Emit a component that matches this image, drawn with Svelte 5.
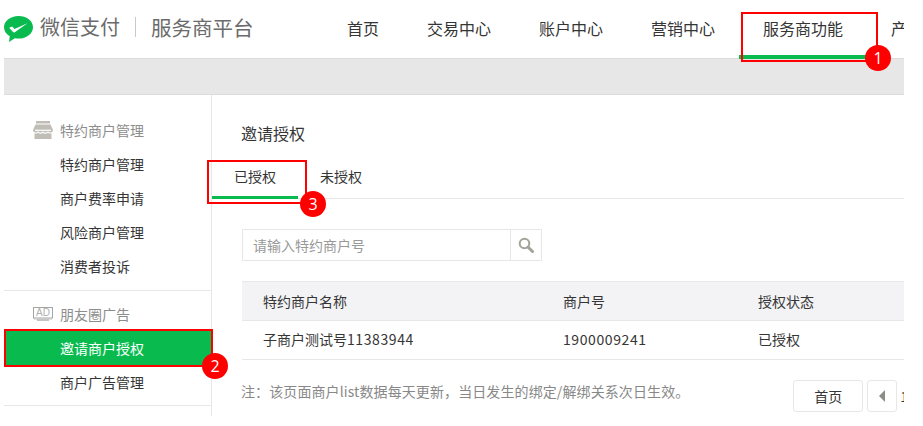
<script>
  const navs = ['首页', '交易中心', '账户中心', '营销中心', '服务商功能', '产品中心']
  const specials = ['特约商户管理', '商户费率申请', '风险商户管理', '消费者投诉']
</script>

<div class="page">
  <header>
    <div class="brand">
      <svg class="logo" width="29" height="26" viewBox="0 0 29 26">
        <path d="M14.500 0C6.500 0 0 5 0 11.200c0 3.800 2.300 7 5.800 9L5 26l5.800-3.700c1.200.2 2.400.3 3.700.3 8 0 14.500-5 14.500-11.400S22.500 0 14.500 0z" fill="#09bb4f" />
        <path d="M5.200 11.800l3-1.300 2.300 2.600L23.500 7.200 10.800 16.300c-.6.400-1.300.3-1.800-.2z" fill="#fff" />
      </svg>
      <span class="pay">微信支付</span>
      <span class="divider"></span>
      <span class="pay wide">服务商平台</span>
    </div>
    <nav>
      {#each navs as item, i}
        <a class:active={i === 4}>{item}</a>
      {/each}
    </nav>
  </header>
  <div class="band"></div>

  <div class="body">
    <aside>
      <section>
        <h4>
          <svg width="20" height="18" viewBox="0 0 20 18">
            <path d="M3 0h14v2.500H3zM2.500 3.500h15L20 9H0z" fill="#bfbdb6" />
            <path d="M0 9h20c0 1.500-1 2.500-2.500 2.500-1 0-2-.5-2.500-1.300-.5.800-1.500 1.300-2.500 1.300s-2-.5-2.500-1.300c-.5.800-1.500 1.300-2.500 1.300S5.500 11 5 10.200C4.500 11 3.500 11.500 2.500 11.500 1 11.500 0 10.500 0 9z" fill="#bfbdb6" />
            <path d="M1.500 12.500c1.300.2 2.600 0 3.500-.8.800.7 1.600 1 2.500 1s1.900-.3 2.500-1c.6.700 1.600 1 2.500 1s1.700-.3 2.500-1c.9.800 2.200 1 3.500.8V18h-17z" fill="#bfbdb6" />
            <path d="M2 8.700h16v1.200H2z" fill="#fff" />
          </svg>
          特约商户管理
        </h4>
        {#each specials as s}
          <a>{s}</a>
        {/each}
      </section>
      <section>
        <h4>
          <svg width="20" height="14" viewBox="0 0 20 14">
            <rect x="0.500" y="0.500" width="19" height="10.500" fill="none" stroke="#a5a5a5" />
            <path d="M1 11.500h18v1H1zM4 12.500h12V14H4z" fill="#c4c4c4" />
            <text x="10" y="9" text-anchor="middle" font-size="10" fill="#b0b0b0" font-family="Liberation Sans, sans-serif">AD</text>
          </svg>
          朋友圈广告
        </h4>
        <a class="current">邀请商户授权</a>
        <a class="after">商户广告管理</a>
      </section>
    </aside>

    <main>
      <h2>邀请授权</h2>
      <div class="tabs">
        <a class="tab on">已授权</a>
        <a class="tab">未授权</a>
      </div>
      <div class="search">
        <span class="field">请输入特约商户号</span>
        <span class="go">
          <svg width="16" height="16" viewBox="0 0 16 16">
            <circle cx="6.500" cy="6.500" r="4.800" fill="none" stroke="#a3a39b" stroke-width="2" />
            <path d="M10 10l4.500 4.500" stroke="#a3a39b" stroke-width="3" stroke-linecap="round" />
          </svg>
        </span>
      </div>
      <table>
        <thead>
          <tr><th>特约商户名称</th><th>商户号</th><th>授权状态</th></tr>
        </thead>
        <tbody>
          <tr>
            <td>子商户测试号<span class="digits">11383944</span></td>
            <td><span class="digits">1900009241</span></td>
            <td>已授权</td>
          </tr>
        </tbody>
      </table>
      <div class="foot">
        <p>注：该页面商户list数据每天更新，当日发生的绑定/解绑关系次日生效。</p>
        <div class="pager">
          <button class="first">首页</button>
          <button class="prev"><i></i></button>
          <span class="num">1</span>
        </div>
      </div>
    </main>
  </div>

  <div class="mark m1"></div>
  <div class="mark m2"></div>
  <div class="mark m3"></div>
  <span class="badge b1">1</span>
  <span class="badge b2">2</span>
  <span class="badge b3">3</span>
</div>

<style>
  :global(body) {
    margin: 0;
    background: #fff;
  }
  .page {
    position: relative;
    width: 923px;
    height: 426px;
    overflow: hidden;
    background: #fff;
    font-family: "Noto Sans CJK SC", "Liberation Sans", sans-serif;
    font-size: 14px;
    color: #353535;
  }
  header {
    display: flex;
    justify-content: space-between;
    width: 900px;
    height: 58px;
    margin-left: 4px;
    overflow: hidden;
  }
  .brand {
    display: flex;
    align-items: center;
    height: 58px;
    box-sizing: border-box;
    padding-bottom: 2px;
  }
  .logo {
    margin: 2px 7px 0 0;
  }
  .pay {
    font-size: 20px;
    line-height: 28px;
    margin-bottom: 2px;
    color: #6b6b6b;
  }
  .pay.wide {
    font-size: 20.5px;
  }
  .divider {
    width: 1px;
    height: 20px;
    margin: 0 15px 2px;
    background: #c9c9c9;
  }
  nav {
    position: absolute;
    left: 323px;
    top: 0;
    display: flex;
    width: 581px;
    height: 59px;
    overflow: hidden;
    white-space: nowrap;
  }
  nav a {
    flex: none;
    box-sizing: border-box;
    height: 59px;
    padding: 0 24px;
    font-size: 16px;
    line-height: 57px;
    color: #353535;
  }
  nav a.active {
    border-bottom: 4px solid #09bb4f;
  }
  .band {
    width: 900px;
    height: 37px;
    margin-left: 4px;
    border-top: 1px solid #dcdcdc;
    border-bottom: 1px solid #dcdcdc;
    box-sizing: border-box;
    background: #e7e7e7;
  }
  .body {
    display: flex;
    width: 900px;
    height: 331px;
    margin-left: 4px;
    overflow: hidden;
  }
  aside {
    flex: none;
    box-sizing: border-box;
    width: 208px;
    height: 321px;
    padding-top: 18px;
    border-right: 1px solid #e7e7e7;
  }
  section {
    padding-bottom: 6px;
    border-bottom: 1px solid #e7e7e7;
  }
  section:first-child {
    padding-bottom: 7px;
  }
  section + section {
    padding-top: 6px;
  }
  h4 {
    display: flex;
    align-items: center;
    height: 34px;
    margin: 0;
    padding-left: 29px;
    font-size: 14px;
    font-weight: 400;
    color: #8d8d8d;
  }
  h4 svg {
    margin-right: 7px;
  }
  aside a {
    display: block;
    height: 34px;
    padding-left: 56px;
    line-height: 34px;
    color: #353535;
  }
  aside a.current {
    height: 36px;
    margin-top: -1px;
    line-height: 36px;
    color: #fff;
    background: #09bb4f;
  }
  aside a.after {
    margin-top: -1px;
  }
  main {
    flex: 1;
    min-width: 0;
  }
  h2 {
    margin: 25px 0 0 29px;
    font-size: 16px;
    font-weight: 400;
    line-height: 26px;
    color: #353535;
  }
  .tabs {
    display: flex;
    height: 39px;
    margin-top: 14px;
    box-sizing: border-box;
    border-bottom: 1px solid #e7e7e7;
  }
  .tab {
    box-sizing: border-box;
    height: 39px;
    padding: 0 22px;
    line-height: 32px;
  }
  .tab.on {
    border-bottom: 3px solid #09bb4f;
  }
  .search {
    display: flex;
    box-sizing: border-box;
    width: 300px;
    height: 32px;
    margin: 30px 0 0 30px;
    border: 1px solid #e7e7e7;
  }
  .field {
    flex: 1;
    padding-left: 10px;
    line-height: 30px;
    color: #999;
  }
  .go {
    display: flex;
    align-items: center;
    justify-content: center;
    width: 30px;
    border-left: 1px solid #e7e7e7;
  }
  table {
    width: 662px;
    margin: 20px 0 0 30px;
    border-collapse: collapse;
    table-layout: fixed;
  }
  th,
  td {
    box-sizing: border-box;
    height: 39px;
    padding: 0 0 0 21px;
    text-align: left;
    font-weight: 400;
    color: #353535;
    border-top: 1px solid #e7e7e7;
    border-bottom: 1px solid #e7e7e7;
  }
  th {
    background: #f3f3f5;
  }
  td {
    padding-bottom: 2px;
  }
  th:nth-child(1) {
    width: 300px;
  }
  th:nth-child(2) {
    width: 195px;
  }
  .digits {
    letter-spacing: 0.6px;
  }
  .foot {
    display: flex;
    justify-content: space-between;
    width: 698px;
    margin-top: 20px;
  }
  .foot p {
    margin: 0 0 0 29px;
    font-size: 14px;
    line-height: 22px;
    letter-spacing: 0.1px;
    color: #888;
  }
  .pager {
    display: flex;
    gap: 4px;
    white-space: nowrap;
  }
  .pager button {
    box-sizing: border-box;
    height: 32px;
    padding: 0;
    border: 1px solid #e7e7e7;
    border-radius: 3px;
    background: #fff;
    font: inherit;
    color: #353535;
  }
  .first {
    width: 70px;
  }
  .prev {
    display: flex;
    align-items: center;
    justify-content: center;
    width: 30px;
  }
  .prev i {
    width: 0;
    height: 0;
    border-top: 6px solid transparent;
    border-bottom: 6px solid transparent;
    border-right: 6px solid #8d8d85;
  }
  .num {
    line-height: 32px;
    margin: 0 2px 0 -1px;
  }
  .mark {
    position: absolute;
    box-sizing: border-box;
    border: 2px solid #f00;
  }
  .m1 {
    left: 741px;
    top: 12px;
    width: 137px;
    height: 50px;
  }
  .m2 {
    left: 4px;
    top: 329px;
    width: 209px;
    height: 38px;
  }
  .m3 {
    left: 207px;
    top: 160px;
    width: 100px;
    height: 44px;
  }
  .badge {
    position: absolute;
    width: 26px;
    height: 26px;
    border-radius: 50%;
    background: #f00;
    color: #fff;
    font-family: "Open Sans", sans-serif;
    font-size: 16px;
    line-height: 26px;
    text-align: center;
  }
  .b1 {
    left: 865px;
    top: 45px;
  }
  .b2 {
    left: 202px;
    top: 353px;
  }
  .b3 {
    left: 300px;
    top: 191px;
  }
</style>
